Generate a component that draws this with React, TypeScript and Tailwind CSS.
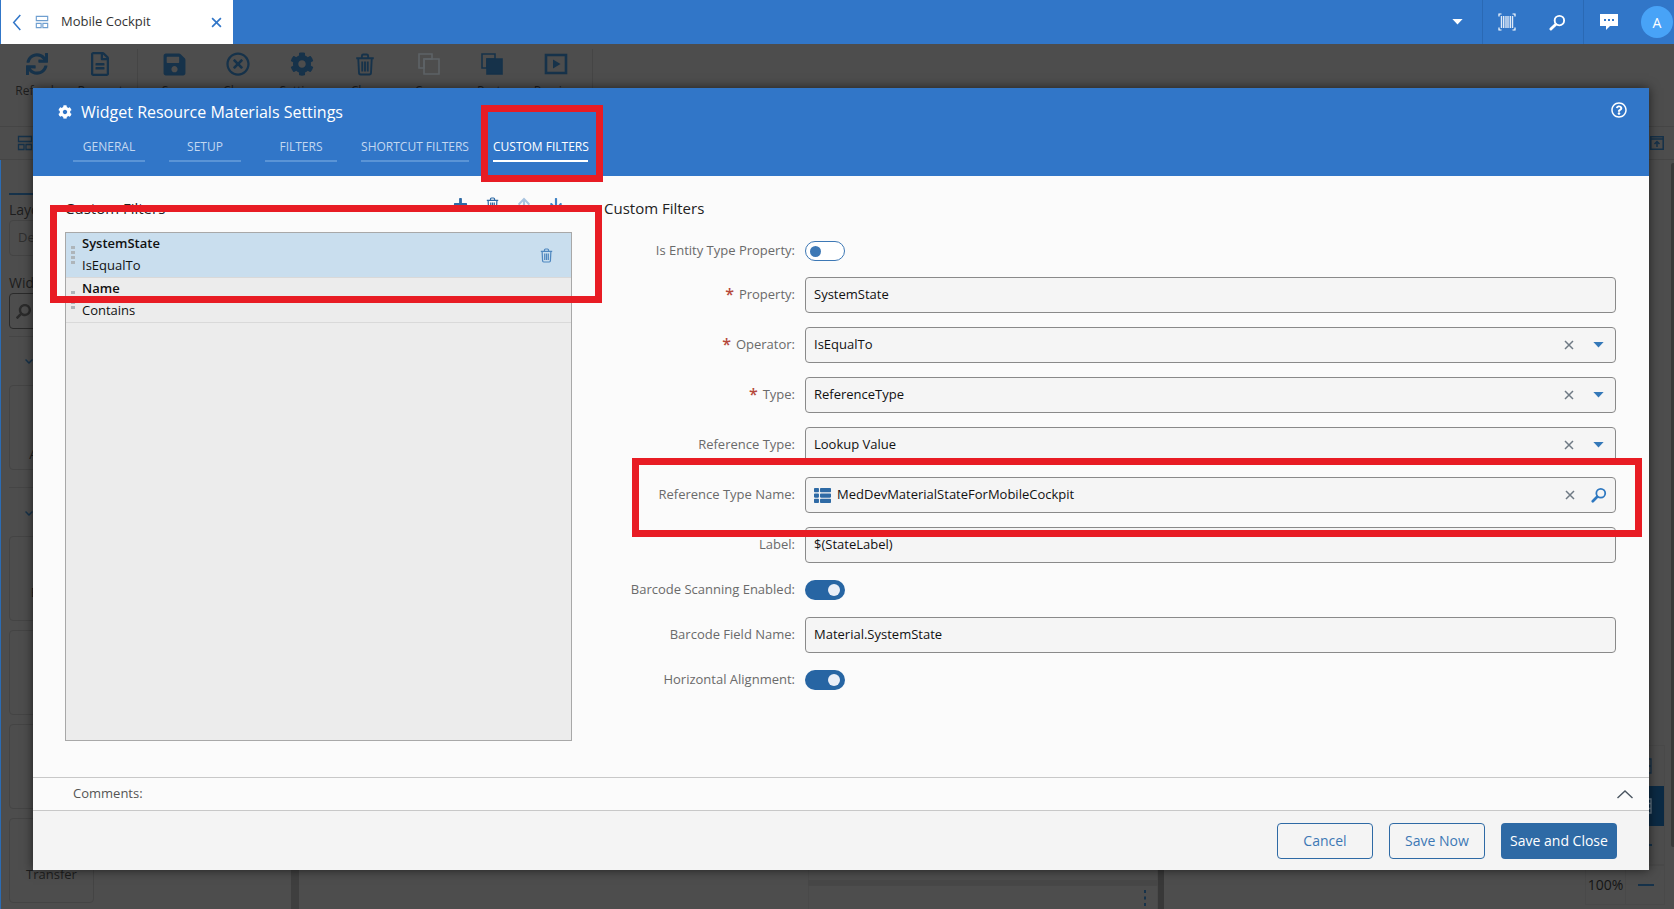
import React from "react";
import { FaCog, FaSync, FaRegFileAlt, FaSave, FaRegTimesCircle, FaRegQuestionCircle, FaThList, FaSearch, FaChevronDown, FaArrowUp, FaArrowDown, FaPlus } from "react-icons/fa";

const font = { fontFamily: '"Open Sans", "Noto Sans", sans-serif' };

function Trash({ className = "" }: { className?: string }) {
  return (
    <svg viewBox="0 0 16 18" className={className} fill="none" stroke="currentColor" strokeWidth="1.5">
      <path d="M1 4h14M5.5 4V2.2C5.5 1.5 6 1 6.7 1h2.6c.7 0 1.2.5 1.2 1.2V4M2.6 4l.6 11.6c0 .8.6 1.4 1.4 1.4h6.8c.8 0 1.4-.6 1.4-1.4L13.4 4M5.8 6.5v8M8 6.5v8M10.2 6.5v8" />
    </svg>
  );
}

function LayoutIcon({ className = "" }: { className?: string }) {
  return (
    <svg viewBox="0 0 16 16" className={className} fill="none" stroke="currentColor" strokeWidth="1.3">
      <path d="M1.5 1.5h13v5h-13zM1.5 9.5h5.5v5h-5.5zM9 9.5h5.5v5H9z" />
    </svg>
  );
}

function Lens({ className = "" }: { className?: string }) {
  return (
    <svg viewBox="0 0 18 18" className={className} fill="none" stroke="currentColor">
      <circle cx="11" cy="7" r="5" strokeWidth="2" />
      <path d="M7 11 2 16" strokeWidth="3" strokeLinecap="round" />
    </svg>
  );
}

function Barcode({ className = "" }: { className?: string }) {
  return (
    <svg viewBox="0 0 18 18" className={className} fill="none" stroke="currentColor">
      <path d="M3.5 1H1v2.5M14.5 1H17v2.5M3.5 17H1v-2.5M14.5 17H17v-2.5" strokeWidth="1.2" />
      <path d="M3.5 3v12M5.7 3v12M8 3v12M10 3v12M12.3 3v12M14.5 3v12" strokeWidth="1.4" opacity=".85" />
    </svg>
  );
}

function Chat({ className = "" }: { className?: string }) {
  return (
    <svg viewBox="0 0 18 17" className={className}>
      <path fill="currentColor" fillRule="evenodd" d="M0 0h18v12h-8l-4 4v-4H0zM4 5h2v2H4zM8 5h2v2H8zM12 5h2v2h-2z" />
    </svg>
  );
}

function Copy2({ filled, className = "" }: { filled?: boolean; className?: string }) {
  return (
    <svg viewBox="0 0 24 24" className={className} fill={filled ? "currentColor" : "none"} stroke="currentColor" strokeWidth="1.6">
      <path d="M2 2h13v5H7v9H2z" fill="none" />
      <path d="M7 7h15v15H7z" />
    </svg>
  );
}

function Play({ className = "" }: { className?: string }) {
  return (
    <svg viewBox="0 0 24 24" className={className}>
      <path d="M2 3h20v18H2z" fill="none" stroke="currentColor" strokeWidth="2.6" />
      <path d="M9 7.5v9l7.5-4.5z" fill="currentColor" />
    </svg>
  );
}

function Caret({ className = "" }: { className?: string }) {
  return (
    <svg viewBox="0 0 12 7" className={className}>
      <path d="M0 0h12L6 6.5z" fill="currentColor" />
    </svg>
  );
}

function X({ className = "" }: { className?: string }) {
  return (
    <svg viewBox="0 0 10 10" className={className} fill="none" stroke="currentColor" strokeWidth="1.5">
      <path d="M1 1l8 8M9 1l-8 8" />
    </svg>
  );
}

function ToolBtn({ label, children, muted }: { label: string; children: React.ReactNode; muted?: boolean }) {
  return (
    <div className={`flex w-[63.5px] flex-col items-center ${muted ? "text-[#5e6367]" : "text-[#16324a]"}`}>
      <div className="flex h-[30px] items-center justify-center">{children}</div>
      <span className="mt-[4px] text-[12px] leading-[16px] text-[#1d1d1d]">{label}</span>
    </div>
  );
}

function Card({ text, low }: { text?: string; low?: boolean }) {
  return (
    <div className={`flex h-[85px] w-[85px] shrink-0 items-end justify-center rounded-[4px] border border-[#444444] text-[13px] leading-[18px] text-[#1d1d1d] ${low ? "pb-[6px]" : "pb-[19px]"}`}>
      {text}
    </div>
  );
}

function Row({ label, required, children, className = "" }: { label: string; required?: boolean; children: React.ReactNode; className?: string }) {
  return (
    <div className={`flex items-center ${className}`}>
      <div className="flex w-[191px] shrink-0 items-center justify-end pb-[2px] text-[13px] leading-[18px] text-[#6a6a6a]">
        {required && <span className="mr-[5px] text-[16px] font-semibold leading-[16px] text-[#b5483a]">*</span>}
        {label}
      </div>
      <div className="ml-[10px] flex-1">{children}</div>
    </div>
  );
}

function Field({ value, kind, icon }: { value: string; kind?: "select" | "lookup"; icon?: boolean }) {
  return (
    <div className="flex h-[36px] items-center rounded-[4px] border border-[#8a8a8a] bg-[#f5f5f5] pl-[8px] text-[13px] text-[#111111]">
      {icon && <FaThList className="mr-[6px] h-[17px] w-[17px] text-[#2e6aa5]" />}
      <span className="flex-1">{value}</span>
      {kind && <X className="h-[10px] w-[10px] text-[#6f7a84]" />}
      {kind === "select" && <Caret className="ml-[19px] mr-[11px] h-[6px] w-[11px] text-[#3478b8]" />}
      {kind === "lookup" && <Lens className="ml-[16px] mr-[8px] h-[16px] w-[16px] text-[#2e78c0]" />}
    </div>
  );
}

function Toggle({ on }: { on?: boolean }) {
  return on ? (
    <div className="flex h-[20px] w-[40px] items-center justify-end rounded-full bg-[#2765a3] pr-[5px]">
      <div className="h-[12px] w-[12px] rounded-full bg-[#e9eef7]" />
    </div>
  ) : (
    <div className="flex h-[20px] w-[40px] items-center rounded-full border border-[#3d78b5] bg-white pl-[4px]">
      <div className="h-[11px] w-[11px] rounded-full bg-[#3d78b5]" />
    </div>
  );
}

function Tab({ label, active, w }: { label: string; active?: boolean; w: string }) {
  return (
    <div className={`${w} h-[29px] whitespace-nowrap border-b-2 pt-[5px] text-center text-[12px] leading-[17px] ${active ? "border-white text-white" : "border-[#5a94d6] text-[#c3d8f1]"}`}>
      {label}
    </div>
  );
}

function ListItem({ name, op, selected }: { name: string; op: string; selected?: boolean }) {
  return (
    <div className={`flex h-[45px] items-center border-b border-[#d9d9d9] pl-[5px] pr-[18px] ${selected ? "bg-[#c9deee]" : ""}`}>
      <div className="mr-[7px] flex w-[4px] flex-col gap-[2px]">
        {[0, 1, 2, 3].map((i) => (
          <div key={i} className="h-[3px] w-[4px] bg-[#aeb5ba]" />
        ))}
      </div>
      <div className="-mt-[2px] flex-1 text-[13px] leading-[22px] text-[#111111]">
        <div className="font-semibold">{name}</div>
        <div>{op}</div>
      </div>
      {selected && <Trash className="h-[15px] w-[13px] text-[#4e87bf]" />}
    </div>
  );
}

function IconSlot({ children }: { children: React.ReactNode }) {
  return <div className="flex w-[32px] justify-center">{children}</div>;
}

function Dialog() {
  return (
    <div className="absolute left-[33px] top-[88px] flex h-[782px] w-[1616px] flex-col bg-[#fbfbfb] shadow-[0_0_10px_rgba(0,0,0,0.6)]">
      <div className="relative h-[88px] shrink-0 bg-[#3176c8] pl-[25px] pt-[13px] text-white">
        <div className="flex h-[22px] items-center">
          <FaCog className="h-[14px] w-[14px]" />
          <span className="ml-[9px] text-[16px] leading-[22px]">Widget Resource Materials Settings</span>
        </div>
        <div className="ml-[15px] mt-[10px] flex gap-[24px]">
          <Tab label="GENERAL" w="w-[72px]" />
          <Tab label="SETUP" w="w-[72px]" />
          <Tab label="FILTERS" w="w-[72px]" />
          <Tab label="SHORTCUT FILTERS" w="w-[108px]" />
          <Tab label="CUSTOM FILTERS" active w="w-[95px]" />
        </div>
        <FaRegQuestionCircle className="absolute right-[22px] top-[14px] h-[16px] w-[16px]" />
      </div>

      <div className="flex flex-1 pl-[32px] pr-[33px]">
        <div className="flex w-[507px] shrink-0 flex-col">
          <div className="mt-[21px] flex h-[22px] items-start">
            <span className="flex-1 text-[15px] leading-[22px] text-[#222222]">Custom Filters</span>
            <div className="flex items-start text-[#2e6aa5]">
              <IconSlot><FaPlus className="h-[15px] w-[15px]" /></IconSlot>
              <IconSlot><Trash className="h-[15px] w-[13px]" /></IconSlot>
              <IconSlot><FaArrowUp className="h-[14px] w-[14px] text-[#a9c4df]" /></IconSlot>
              <IconSlot><FaArrowDown className="h-[14px] w-[14px] text-[#3f82c4]" /></IconSlot>
            </div>
          </div>
          <div className="mt-[13px] h-[509px] border border-[#a8a8a8] bg-[#ececec]">
            <ListItem name="SystemState" op="IsEqualTo" selected />
            <ListItem name="Name" op="Contains" />
          </div>
        </div>
        <div className="ml-[32px] flex-1">
          <div className="mt-[21px] h-[22px] text-[15px] leading-[22px] text-[#222222]">Custom Filters</div>
          <Row label="Is Entity Type Property:" className="mt-[22px] h-[20px]">
            <Toggle />
          </Row>
          <Row label="Property:" required className="mt-[16px]">
            <Field value="SystemState" />
          </Row>
          <Row label="Operator:" required className="mt-[14px]">
            <Field value="IsEqualTo" kind="select" />
          </Row>
          <Row label="Type:" required className="mt-[14px]">
            <Field value="ReferenceType" kind="select" />
          </Row>
          <Row label="Reference Type:" className="mt-[14px]">
            <Field value="Lookup Value" kind="select" />
          </Row>
          <Row label="Reference Type Name:" className="mt-[14px]">
            <Field value="MedDevMaterialStateForMobileCockpit" kind="lookup" icon />
          </Row>
          <Row label="Label:" className="mt-[14px]">
            <Field value="$(StateLabel)" />
          </Row>
          <Row label="Barcode Scanning Enabled:" className="mt-[17px] h-[20px]">
            <Toggle on />
          </Row>
          <Row label="Barcode Field Name:" className="mt-[17px]">
            <Field value="Material.SystemState" />
          </Row>
          <Row label="Horizontal Alignment:" className="mt-[17px] h-[20px]">
            <Toggle on />
          </Row>
        </div>
      </div>

      <div className="flex h-[34px] shrink-0 items-center border-y border-[#c8c8c8] pl-[40px] pr-[16px] text-[13px] text-[#555555]">
        <span className="flex-1">Comments:</span>
        <svg viewBox="0 0 16 9" className="h-[9px] w-[16px] text-[#4a5560]" fill="none" stroke="currentColor" strokeWidth="1.4">
          <path d="M.5 8 8 1l7.5 7" />
        </svg>
      </div>

      <div className="flex h-[59px] shrink-0 items-center justify-end gap-[16px] bg-[#f4f4f4] pr-[32px] text-[14px]">
        <div className="flex h-[36px] w-[96px] items-center justify-center rounded-[4px] border border-[#2e6aa5] text-[#3d78b5]">Cancel</div>
        <div className="flex h-[36px] w-[96px] items-center justify-center rounded-[4px] border border-[#2e6aa5] text-[#3d78b5]">Save Now</div>
        <div className="flex h-[36px] w-[116px] items-center justify-center rounded-[4px] bg-[#2e6aa5] text-white">Save and Close</div>
      </div>
    </div>
  );
}

export default function App() {
  return (
    <div style={font} className="relative flex h-[909px] w-[1674px] flex-col overflow-hidden bg-[#4d4d4d]">
      <div className="flex h-[44px] shrink-0 items-stretch bg-[#3176c8] pl-[1px] text-white">
        <div className="flex w-[232px] items-center bg-white text-[#333333]">
          <svg viewBox="0 0 10 18" className="ml-[11px] h-[17px] w-[10px] text-[#3176c8]" fill="none" stroke="currentColor" strokeWidth="1.6">
            <path d="M8.5 1 1.5 9l7 8" />
          </svg>
          <LayoutIcon className="ml-[13px] h-[14px] w-[14px] text-[#6f9fd0]" />
          <span className="ml-[12px] flex-1 text-[13px]">Mobile Cockpit</span>
          <X className="mr-[11px] h-[11px] w-[11px] text-[#3176c8]" />
        </div>
        <div className="flex flex-1 items-center justify-end">
          <Caret className="mr-[19px] h-[6px] w-[11px]" />
          <div className="flex h-full w-[102px] items-center border-x border-[#2a69b4] pl-[15px]">
            <Barcode className="h-[18px] w-[18px]" />
            <Lens className="ml-[33px] h-[17px] w-[17px]" />
          </div>
          <div className="flex h-full w-[90px] items-center pl-[16px]">
            <Chat className="h-[17px] w-[18px]" />
            <div className="ml-[23px] flex h-[32px] w-[32px] items-center justify-center rounded-full bg-[#48a3f7] text-[14px]">A</div>
          </div>
        </div>
      </div>

      <div className="flex h-[83px] shrink-0 items-start border-b border-[#454545] pl-[5px] pt-[5px]">
        <ToolBtn label="Refresh"><FaSync className="h-[22px] w-[22px]" /></ToolBtn>
        <ToolBtn label="Request"><FaRegFileAlt className="h-[24px] w-[20px]" /></ToolBtn>
        <div className="mx-[5px] h-[60px] w-px bg-[#454545]" />
        <ToolBtn label="Save"><FaSave className="h-[25px] w-[25px]" /></ToolBtn>
        <ToolBtn label="Close"><FaRegTimesCircle className="h-[24px] w-[24px]" /></ToolBtn>
        <ToolBtn label="Settings"><FaCog className="h-[24px] w-[24px]" /></ToolBtn>
        <ToolBtn label="Clear"><Trash className="h-[25px] w-[20px]" /></ToolBtn>
        <ToolBtn label="Copy" muted><Copy2 className="h-[24px] w-[24px]" /></ToolBtn>
        <ToolBtn label="Paste"><Copy2 filled className="h-[24px] w-[24px]" /></ToolBtn>
        <ToolBtn label="Preview"><Play className="h-[24px] w-[24px]" /></ToolBtn>
        <div className="ml-[4px] h-[60px] w-px bg-[#454545]" />
      </div>

      <div className="flex h-[33px] shrink-0 items-center justify-between border-b border-[#454545] pl-[17px] pr-[10px] text-[#16324a]">
        <LayoutIcon className="h-[16px] w-[16px]" />
        <svg viewBox="0 0 14 14" className="h-[14px] w-[14px]" fill="none" stroke="currentColor" strokeWidth="1.5">
          <path d="M.8.8h12.4v12.4H.8zM1 3h12M7 11V6M4.5 8 7 5.5 9.5 8" />
        </svg>
      </div>

      <div className="flex min-h-0 flex-1">
        <div className="w-[291px] shrink-0 border-l border-[#2b6cb4] pl-[8px] text-[#1d1d1d]">
          <div className="mt-[33px] h-[2px] w-[200px] bg-[#16324a]" />
          <div className="mt-[5px] text-[14px] leading-[20px]">Layout</div>
          <div className="flex h-[36px] w-[240px] items-center rounded-[4px] border border-[#444444] pl-[8px] text-[13px] text-[#2f2f2f]">Default</div>
          <div className="mt-[17px] text-[14px] leading-[20px]">Widgets</div>
          <div className="flex h-[36px] w-[240px] items-center rounded-[4px] border border-[#2a2a2a] pl-[6px]">
            <FaSearch className="h-[15px] w-[15px] -scale-x-100 text-[#2b2b2b]" />
          </div>
          <div className="mt-[7px] h-px w-[250px] bg-[#454545]" />
          <FaChevronDown className="ml-[14px] mt-[20px] h-[9px] w-[12px] text-[#16324a]" />
          <div className="mt-[19px]"><Card text="Actions" low /></div>
          <div className="mt-[17px] h-px w-[250px] bg-[#454545]" />
          <FaChevronDown className="ml-[14px] mt-[21px] h-[9px] w-[12px] text-[#16324a]" />
          <div className="mt-[18px] flex flex-col gap-[9px]">
            <Card text="Button" />
            <Card />
            <Card />
            <Card text="Transfer" />
          </div>
        </div>
        <div className="w-[8px] shrink-0 bg-[#3f3f3f]" />
        <div className="flex flex-1 flex-col justify-end pl-[509px]">
          <div className="h-[42px] border-x border-[#494949]" />
          <div className="h-[6px] bg-[#474747]" />
          <div className="flex h-[23px] items-center justify-end border-x border-[#494949] pr-[10px] text-[#16324a]">
            <svg viewBox="0 0 4 20" className="h-[20px] w-[4px]">
              <path d="M2 2v3M2 8.5v3M2 15v3" stroke="currentColor" strokeWidth="2" />
            </svg>
          </div>
        </div>
        <div className="w-[6px] shrink-0 bg-[#383838]" />
        <div className="flex w-[510px] shrink-0">
          <div className="flex flex-1 flex-col items-end pr-[6px] pt-[585px]">
            <div className="flex w-[80px] flex-col border border-[#494949]">
              <div className="flex h-[40px] items-center justify-end pr-[12px] text-[#16324a]">
                <svg viewBox="0 0 16 16" className="h-[16px] w-[16px]" fill="none" stroke="currentColor" strokeWidth="1.3">
                  <path d="M1 1h14v14H1zM1 8h14" />
                </svg>
              </div>
              <div className="flex h-[40px] items-center justify-end bg-[#0b2a44] pr-[12px] text-[#6a7c8a]">
                <svg viewBox="0 0 16 16" className="h-[16px] w-[16px]" fill="none" stroke="currentColor" strokeWidth="1.3">
                  <path d="M1 1h14v14H1zM1 5.5h14M1 10.5h14M8 1v14" />
                </svg>
              </div>
              <div className="flex h-[38px] items-center justify-end pr-[12px]">
                <span className="h-[2px] w-[16px] bg-[#16324a]" />
              </div>
            </div>
            <div className="flex h-[40px] w-[80px] items-center border border-[#494949] text-[14px] text-[#151515]">
              <span className="w-[40px] border-r border-[#494949] text-center leading-[38px]">100%</span>
              <span className="ml-[12px] h-[2px] w-[16px] bg-[#16324a]" />
            </div>
          </div>
          <div className="mt-[3px] h-[684px] w-[3px] shrink-0 rounded-l-[2px] bg-[#383838]" />
        </div>
      </div>

      <Dialog />

      <div className="absolute left-[50px] top-[205px] h-[98px] w-[552px] border-[7px] border-[#e81c24]" />
      <div className="absolute left-[481px] top-[105px] h-[77px] w-[122px] border-[7px] border-[#e81c24]" />
      <div className="absolute left-[632px] top-[458px] h-[79px] w-[1010px] border-[7px] border-[#e81c24]" />
    </div>
  );
}
